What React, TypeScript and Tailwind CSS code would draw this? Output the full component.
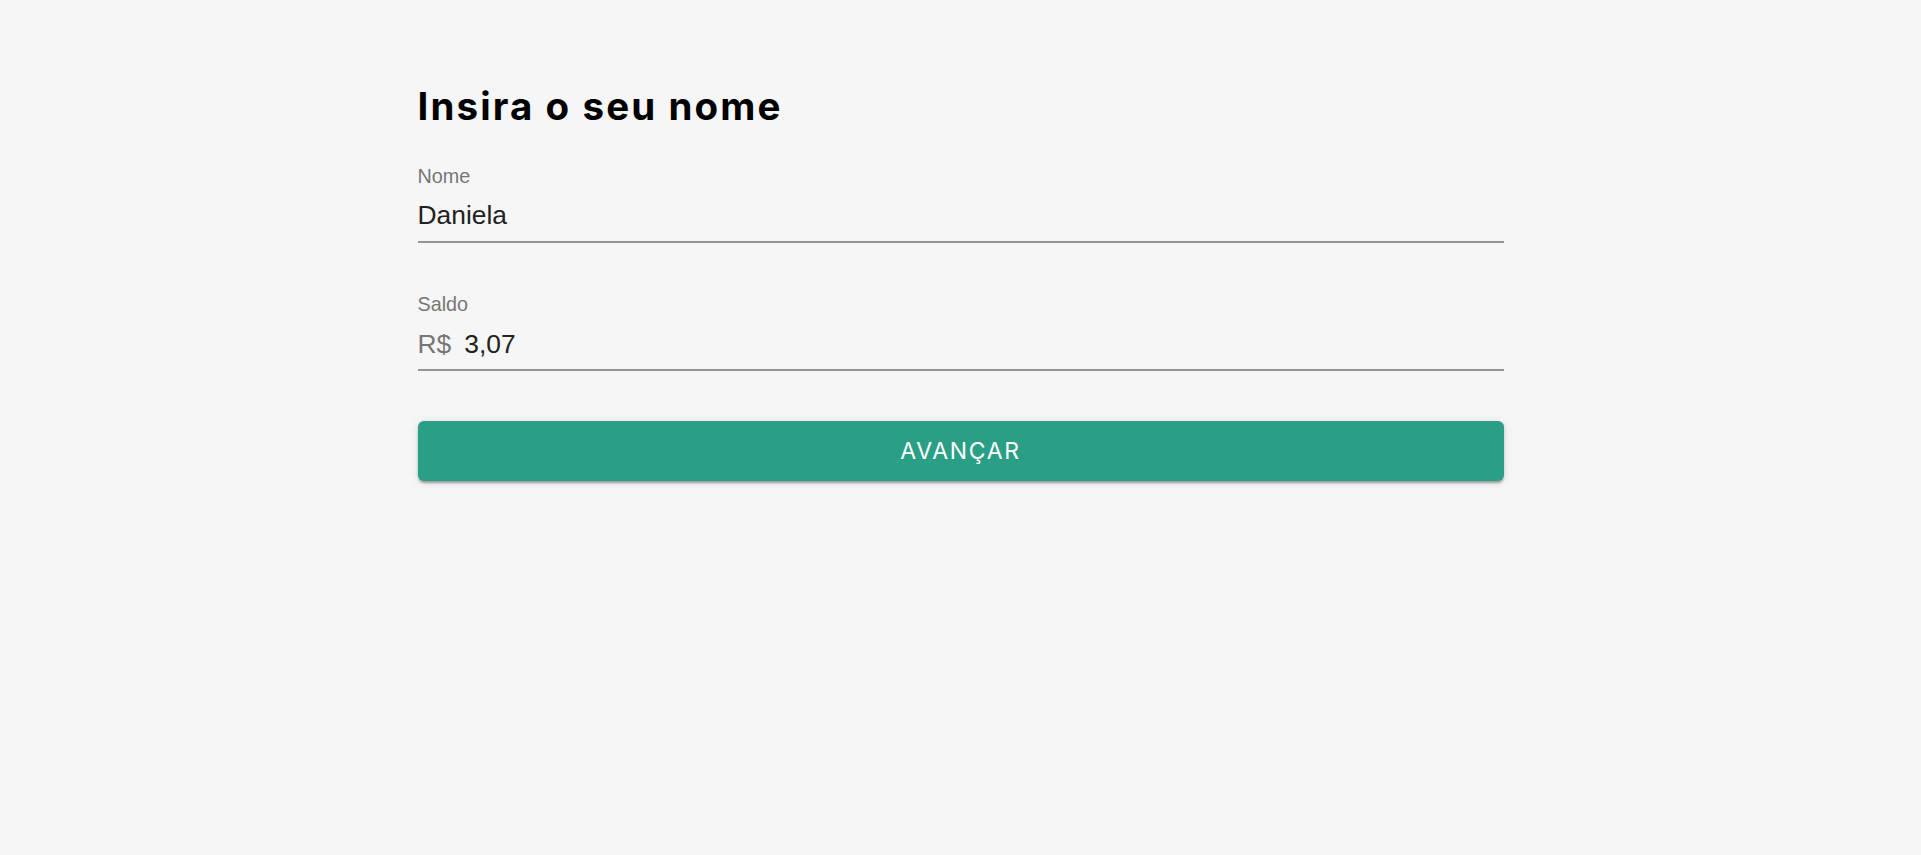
export default function App() {
  return (
    <div className="min-h-[855px] w-full bg-[#f6f6f6]">
      <div className="mx-auto flex w-[1086px] flex-col pt-[82px]">
        <h1 className="text-[38.5px] font-bold leading-[48px] text-black [font-family:Inter,'Noto_Sans',sans-serif] tracking-[2.1px]">
          Insira o seu nome
        </h1>

        <div className="mt-[36px] flex flex-col [font-family:'Liberation_Sans',Arial,sans-serif]">
          <label className="text-[19.8px] leading-[20px] text-[#767676]">Nome</label>
          <div className="mt-[14px] flex border-b-2 border-[#959595] pb-[11px] text-[26.4px] leading-[30px] text-[#212121]">
            <span>Daniela</span>
          </div>
        </div>

        <div className="mt-[51px] flex flex-col [font-family:'Liberation_Sans',Arial,sans-serif]">
          <label className="text-[19.8px] leading-[20px] text-[#767676]">Saldo</label>
          <div className="mt-[15px] flex items-baseline border-b-2 border-[#959595] pb-[10px] text-[26.4px] leading-[30px] text-[#212121]">
            <span className="mr-[13px] text-[#767676]">R$</span>
            <span>3,07</span>
          </div>
        </div>

        <button className="mt-[50px] flex h-[60px] w-full items-center justify-center rounded-[6px] bg-[#2a9f86] text-[23px] uppercase tracking-[1.7px] text-white shadow-[0_3px_2px_-1px_rgba(0,0,0,0.2),0_2px_3px_0_rgba(0,0,0,0.14),0_1px_8px_0_rgba(0,0,0,0.12)] [font-family:Inter,'Noto_Sans',sans-serif]">
          Avançar
        </button>
      </div>
    </div>
  );
}
